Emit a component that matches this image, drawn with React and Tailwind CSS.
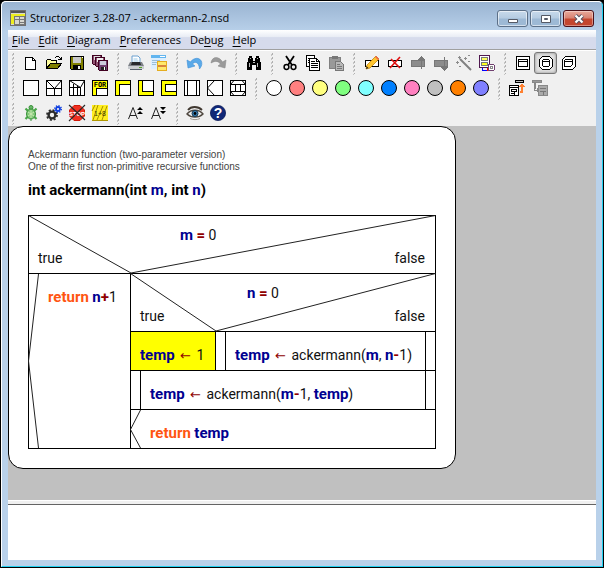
import React from "react";

const ui = "font-['Open_Sans','Noto_Sans',sans-serif]";
const plain = "font-['Roboto','Liberation_Sans',sans-serif]";
const strong = "font-['Roboto','Liberation_Sans',sans-serif] font-bold text-[15px]";

/* ---------- toolbar icons, drawn on a 16 x 16 grid ---------- */

function Icon({ children, crisp = true }) {
  return (
    <svg
      width="16"
      height="16"
      viewBox="0 0 16 16"
      fill="none"
      stroke="#000"
      strokeWidth="1"
      shapeRendering={crisp ? "crispEdges" : "auto"}
      className="block overflow-visible"
      aria-hidden="true"
    >
      {children}
    </svg>
  );
}

const NewIcon = () => (
  <Icon>
    <path d="M2.500 2.500h7l3 3v9h-10z" fill="#fff" />
    <path d="M9.500 2.500v3h3" />
  </Icon>
);
const OpenIcon = () => (
  <Icon>
    <path d="M0.500 13.500v-8l1-1h3l1 1h5v3" fill="#ffffa0" />
    <path d="M0.500 13.500l4-5h11l-4 5z" fill="#808000" />
    <path d="M9 2.500h1M10 1.500h3M13 2.500h1M14 3.500h1M12 4.500h4M15.500 2v3" />
  </Icon>
);
const SaveIcon = () => (
  <Icon>
    <path d="M1.500 1.500h13v13h-12l-1-1z" fill="#808000" />
    <path d="M4 2h8v6H4z" fill="#c8c8c8" stroke="none" />
    <path d="M4 10h8v4h-8z" fill="#000" stroke="none" />
    <path d="M9 11h2v3h-2z" fill="#eee" stroke="none" />
    <path d="M13 2h1v1h-1z" fill="#fff" stroke="none" />
  </Icon>
);
const SaveAllIcon = () => (
  <Icon>
    <path d="M0.500 0.500h9v9h-8l-1-1z" fill="#905070" stroke="#400020" />
    <path d="M2 1h6v4h-6z" fill="#ddd" stroke="none" />
    <path d="M3.500 2.500h9v9h-8l-1-1z" fill="#905070" stroke="#400020" />
    <path d="M5 3h6v4h-6z" fill="#eee" stroke="none" />
    <path d="M6.500 5.500h9v10h-8l-1-1z" fill="#704070" stroke="#400020" />
    <path d="M8 6h6v4h-6z" fill="#ccd" stroke="none" />
    <path d="M9 12h5v3h-5z" fill="#222" stroke="none" />
    <path d="M12 12h1v3h-1z" fill="#fff" stroke="none" />
  </Icon>
);
const PrintIcon = () => (
  <Icon crisp={false}>
    <path d="M4 8V1h6l2 2v5z" fill="#fff" stroke="#6aa0d0" />
    <path d="M5.500 4h4M5.500 6h5" stroke="#9ccbe8" />
    <path d="M2 7h12l2 4v3H0v-3z" fill="#7c8086" stroke="none" />
    <path d="M4 7h8l1 3H3z" fill="#26282c" stroke="none" />
    <path d="M0 11h16v3H0z" fill="#c9ccd0" stroke="none" />
    <path d="M2 14.500h12" stroke="#55606c" />
    <path d="M11 12.500h3" stroke="#58a828" />
  </Icon>
);
const ExportIcon = () => (
  <Icon>
    <path d="M0 0h15v14H0z" fill="#dcefff" stroke="none" />
    <path d="M0 0h15v3H0z" fill="#62b5ef" stroke="none" />
    <path d="M1 5h8v1H1zM1 7h5v1H1zM1 9h4v1H1z" fill="#9bbfd8" stroke="none" />
    <path d="M6.500 6.500h9v9h-9z" fill="#ffe96a" stroke="#e5ad20" />
    <path d="M7 10h8v2H7z" fill="#d9843c" stroke="none" />
    <path d="M9 1h5v1H9z" fill="#fff" stroke="none" />
  </Icon>
);
const UndoIcon = () => (
  <Icon crisp={false}>
    <path d="M0 5l1 8 7-2-2.500-2C8 6 12 7 12.500 14 18 8 13 1 7 4 5 5 4 6 3.500 7z" fill="#5aa9e8" stroke="#3c8fd6" strokeWidth="0.600" />
  </Icon>
);
const RedoIcon = () => (
  <Icon crisp={false}>
    <path d="M16 5l-1 8-7-2 2.500-2C8.500 6 5 5.500 1 8 2 1 9 1 12.500 7z" fill="#9a9a9a" stroke="#8c8c8c" strokeWidth="0.600" />
  </Icon>
);
const FindIcon = () => (
  <Icon>
    <path d="M3 1h3v2h1v3h2V3h1V1h3v2h1v4h1v8h-5v-5H6v5H1V7h1V3h1z" fill="#000" stroke="none" />
    <path d="M4 3h1v1H4zM11 3h1v1h-1zM3 8h1v4H3zM11 8h1v4h-1zM7 7h2v1H7z" fill="#bbb" stroke="none" />
  </Icon>
);
const CutIcon = () => (
  <Icon crisp={false}>
    <path d="M4 1l6 9M12 1L6 10" strokeWidth="1.800" />
    <circle cx="4.500" cy="12" r="2.400" strokeWidth="1.500" />
    <circle cx="11.500" cy="12" r="2.400" strokeWidth="1.500" />
  </Icon>
);
const CopyIcon = () => (
  <Icon>
    <path d="M1.500 .5h8v11h-8z" fill="#fff" />
    <path d="M3 3.500h5M3 5.500h5M3 7.500h3" />
    <path d="M4.500 3.500h7l3 3v9h-10z" fill="#fff" />
    <path d="M6 6.500h4M6 8.500h7M6 10.500h7M6 12.500h7M11.500 3.500v3h3" />
  </Icon>
);
const PasteIcon = () => (
  <Icon>
    <path d="M1.500 2.500h11v11h-11z" fill="#999" stroke="#808080" />
    <path d="M4 1h6v3H4z" fill="#777" stroke="none" />
    <path d="M7.500 6.500h5l3 3v6h-8z" fill="#b8b8b8" stroke="#777" />
    <path d="M9 9.500h3M9 11.500h5M9 13.500h5" stroke="#777" />
  </Icon>
);
const EditIcon = () => (
  <Icon crisp={false}>
    <path d="M1.500 5.500h13v6h-13z" fill="#fff" shapeRendering="crispEdges" />
    <path d="M2 14l1-4L12 1l3 3-9 9z" fill="#ffc52e" stroke="#b87800" strokeWidth="0.700" />
    <path d="M11 2l1-1 3 3-1 1z" fill="#f06050" stroke="none" />
    <path d="M2 14l.8-2.500L4.500 13z" fill="#222" stroke="none" />
  </Icon>
);
const DeleteIcon = () => (
  <Icon crisp={false}>
    <path d="M1.500 5.500h13v6h-13z" fill="#fff" shapeRendering="crispEdges" />
    <path d="M3 13L13 2M4 4l9 9" stroke="#e01010" strokeWidth="1.600" />
  </Icon>
);
const MoveUpIcon = () => (
  <Icon>
    <path d="M1 5.500h13v6H1z" fill="#8c8c8c" stroke="#777" />
    <path d="M11.500 14V1M8 4.500h7M9 3.500h5M10 2.500h3" stroke="#777" />
  </Icon>
);
const MoveDownIcon = () => (
  <Icon>
    <path d="M1 5.500h13v6H1z" fill="#8c8c8c" stroke="#777" />
    <path d="M11.500 2v14M8 12.500h7M9 13.500h5M10 14.500h3" stroke="#777" />
  </Icon>
);
const WandIcon = () => (
  <Icon crisp={false}>
    <path d="M4 4l11 11" stroke="#808080" strokeWidth="2" />
    <path d="M0 7.500h3M1.500 6v3M2 2.500h3M3.500 1v3M8 3.500h3M9.500 2v3M12 .5h2M3 11.500h2M12 6.500h2" stroke="#8c8c8c" />
  </Icon>
);
const TransmuteIcon = () => (
  <Icon>
    <path d="M.5.5h10v12H.5z" fill="#fff" stroke="#501850" />
    <path d="M2.500 2.500h6v3h-6z" fill="#ffff60" stroke="#777" />
    <path d="M2.500 7.500h6v3h-6z" fill="#ffff20" stroke="#777" />
    <path d="M3.500 13v2h4" stroke="#0000ff" />
    <path d="M8 13v3" stroke="#ff0000" />
    <path d="M9.500 9.500h5l1 1v4l-1 1h-5z" fill="#fff" stroke="#704070" />
    <path d="M11.500 11.500h2v2h-2z" stroke="#888" />
  </Icon>
);
const BoxShape = () => (
  <Icon>
    <path d="M1.500 1.500h13v13h-13z" fill="#fff" />
    <path d="M3.500 4.500h9v7h-9zM4 6.500h8" />
  </Icon>
);
const RoundShape = () => (
  <Icon>
    <path d="M4.500 1.500h7l3 3v7l-3 3h-7l-3-3v-7z" fill="#fff" />
    <path d="M5.500 4.500h5l1 1v5l-1 1h-5l-1-1v-5zM5 6.500h6" />
  </Icon>
);
const SliceShape = () => (
  <Icon>
    <path d="M4.500 1.500h10v10l-3 3h-10v-10z" fill="#fff" />
    <path d="M4.500 4.500h7v5l-2 2h-6v-6zM4 6.500h7" />
  </Icon>
);

const Frame = ({ children }) => (
  <Icon>
    <path d="M.5.5h15v15H.5z" fill="#fff" />
    {children}
  </Icon>
);
const AltIcon = () => (
  <Frame>
    <path d="M1 8.500h14M8.500 8v7" />
    <path d="M.5.5l8 8 7-8" shapeRendering="auto" />
  </Frame>
);
const CaseIcon = () => (
  <Frame>
    <path d="M4.500 4v11M8.500 6v9M11.500 7v8M1 7.500h10" />
    <path d="M.5.5l11 7 4-7" shapeRendering="auto" />
  </Frame>
);
const ForIcon = () => (
  <Icon>
    <path d="M.5.5h15v15H.5z" fill="#ffff00" />
    <path d="M4.500 8.500h11v7h-11z" fill="#fff" />
    <text x="8" y="7" textAnchor="middle" fill="#000" stroke="none" fontSize="7" fontWeight="bold" fontFamily="DejaVu Sans Mono, monospace" shapeRendering="auto">FOR</text>
  </Icon>
);
const WhileIcon = () => (
  <Icon>
    <path d="M.5.5h15v15H.5z" fill="#ffff00" />
    <path d="M4.500 4.500h11v11h-11z" fill="#fff" />
  </Icon>
);
const RepeatIcon = () => (
  <Icon>
    <path d="M.5.5h15v15H.5z" fill="#ffff00" />
    <path d="M4.500.5h11v11h-11z" fill="#fff" />
  </Icon>
);
const ForeverIcon = () => (
  <Icon>
    <path d="M.5.5h15v15H.5z" fill="#ffff00" />
    <path d="M4.500 4.500h11v7h-11z" fill="#fff" />
  </Icon>
);
const CallIcon = () => (
  <Frame>
    <path d="M3.500 1v14M12.500 1v14" />
  </Frame>
);
const JumpIcon = () => (
  <Frame>
    <path d="M7.500.5l-7 7.500 7 7.500" shapeRendering="auto" />
  </Frame>
);
const ParallelIcon = () => (
  <Frame>
    <path d="M1 4.500h14M1 11.500h14M5.500 5v6M10.500 5v6" />
    <path d="M.5 4.500l3.500-4M15.500 4.500l-3.500-4M.5 11.500l3.500 4M15.500 11.500l-3.500 4" shapeRendering="auto" />
  </Frame>
);
const colorDot = (color) => () => (
  <Icon crisp={false}>
    <circle cx="8" cy="8" r="7.500" fill={color} />
  </Icon>
);
const CollapseIcon = () => (
  <Icon>
    <path d="M6.500.5h8v2h-8z" fill="#c0c0c0" />
    <path d="M.5 5.500h9v10H.5z" fill="#fff" />
    <path d="M1 7.500h8M2.500 9.500h5v2h-5zM2 13.500h4M5.500 12v3" />
    <path d="M11 11h1V7h-2V6h1V5h1V4h2v1h1v1h1v1h-2v6h-3z" fill="#ff8030" stroke="none" />
  </Icon>
);
const ExpandIcon = () => (
  <Icon>
    <path d="M0 .5h9v2H0z" fill="#999" stroke="#888" />
    <path d="M2 3v7h4M3 3v6M5 8v4" stroke="#888" />
    <path d="M6.500 5.500h9v10h-9z" fill="#aaa" stroke="#888" />
    <path d="M8 8.500h6M8 11.500h6M11.500 12v3" stroke="#777" />
  </Icon>
);
const TurtleIcon = () => (
  <Icon crisp={false}>
    <path d="M2.500 3.500l3 3M13.500 3.500l-3 3M2.500 14l3-3M13.500 14l-3-3" stroke="#48a848" strokeWidth="2.200" />
    <circle cx="8" cy="2.500" r="2" fill="#68b868" stroke="#389038" />
    <ellipse cx="8" cy="9" rx="4.500" ry="5" fill="#80c878" stroke="#389038" />
    <path d="M8 5v8M5 7l6 4M11 7l-6 4" stroke="#c8e8b0" />
    <path d="M8 14v2" stroke="#389038" />
  </Icon>
);
const GearsIcon = () => (
  <Icon crisp={false}>
    <circle cx="6" cy="10" r="3.400" stroke="#2c2c2c" strokeWidth="2.400" />
    <circle cx="6" cy="10" r="5" stroke="#2c2c2c" strokeWidth="1.800" strokeDasharray="2 1.930" />
    <circle cx="12" cy="4" r="2" stroke="#1040e0" strokeWidth="1.800" />
    <circle cx="12" cy="4" r="3.300" stroke="#1040e0" strokeWidth="1.400" strokeDasharray="1.300 1.290" />
  </Icon>
);
const StopIcon = () => (
  <Icon crisp={false}>
    <path d="M5 .5h6L15.500 5v6L11 15.500H5L.5 11V5z" fill="#f03020" stroke="#d01808" />
    <text x="8" y="10.500" textAnchor="middle" fill="#fff" stroke="none" fontSize="6" fontWeight="bold" fontFamily="Liberation Sans, sans-serif">STOP</text>
    <path d="M0 0l16 15M16 0L0 16" stroke="#282828" strokeWidth="1.100" />
  </Icon>
);
const AnalyserIcon = () => (
  <Icon crisp={false}>
    <path d="M0 0h16v16H0z" fill="#ffee20" stroke="none" />
    <path d="M0 6l3-6M1 15l5-15M5 15L11 1M10 15l5-14" stroke="#a89000" />
    <text x="8" y="11" textAnchor="middle" fill="#443800" stroke="none" fontSize="7" fontFamily="Liberation Sans, sans-serif">1+8</text>
    <path d="M0 15.500h16" stroke="#b09800" />
  </Icon>
);
const FontUpIcon = () => (
  <Icon crisp={false}>
    <path d="M.5 14L5 2.500 9.500 14M2 10.500h6" stroke="#222" />
    <path d="M9 5l3-3 3 3zM9 9l3-3 3 3z" fill="#000" stroke="none" />
  </Icon>
);
const FontDownIcon = () => (
  <Icon crisp={false}>
    <path d="M.5 14L5 2.500 9.500 14M2 10.500h6" stroke="#222" />
    <path d="M9 2l3 3 3-3zM9 6l3 3 3-3z" fill="#000" stroke="none" />
  </Icon>
);
const EyeIcon = () => (
  <Icon crisp={false}>
    <path d="M1 5C4 1 11 1 15 5" stroke="#403830" strokeWidth="1.800" />
    <path d="M0 9C4 4 12 4 16 9 12 13 4 13 0 9z" fill="#eee" stroke="#504840" strokeWidth="1.400" />
    <circle cx="8" cy="8.500" r="3" fill="#3880b8" stroke="#183850" />
    <circle cx="8" cy="8.500" r="1.400" fill="#000" stroke="none" />
    <path d="M3 13.500c3 1.500 7 1.500 10 0" stroke="#a09890" />
  </Icon>
);
const HelpIcon = () => (
  <Icon crisp={false}>
    <circle cx="8" cy="8" r="7.600" fill="#102878" stroke="#001050" strokeWidth="0.700" />
    <text x="8" y="13" textAnchor="middle" fill="#fff" stroke="none" fontSize="14" fontWeight="bold" fontFamily="Liberation Sans, sans-serif">?</text>
  </Icon>
);

const toolbarRows = [
  [
    [["New", NewIcon], ["Open", OpenIcon], ["Save", SaveIcon], ["Save all", SaveAllIcon]],
    [["Print", PrintIcon], ["Export as picture", ExportIcon]],
    [["Undo", UndoIcon], ["Redo", RedoIcon]],
    [["Find", FindIcon]],
    [["Cut", CutIcon], ["Copy", CopyIcon], ["Paste", PasteIcon]],
    [["Edit element", EditIcon], ["Delete element", DeleteIcon], ["Move up", MoveUpIcon], ["Move down", MoveDownIcon], ["Wizard", WandIcon], ["Transmute", TransmuteIcon]],
    [["Program", BoxShape], ["Function", RoundShape, true], ["Includable", SliceShape]],
  ],
  [
    [["Instruction", Frame], ["Alternative", AltIcon], ["Case", CaseIcon], ["For loop", ForIcon], ["While loop", WhileIcon], ["Repeat loop", RepeatIcon], ["Endless loop", ForeverIcon], ["Call", CallIcon], ["Jump", JumpIcon], ["Parallel", ParallelIcon]],
    [
      ["White", colorDot("#ffffff")], ["Red", colorDot("#ff8080")], ["Yellow", colorDot("#ffff80")], ["Green", colorDot("#80ff80")], ["Cyan", colorDot("#80ffff")],
      ["Blue", colorDot("#0080ff")], ["Pink", colorDot("#ff80c0")], ["Grey", colorDot("#c0c0c0")], ["Orange", colorDot("#ff8000")], ["Violet", colorDot("#8080ff")],
    ],
    [["Collapse", CollapseIcon], ["Expand", ExpandIcon]],
  ],
  [
    [["Turtleizer", TurtleIcon], ["Executor", GearsIcon], ["Drop breakpoints", StopIcon], ["Analyser", AnalyserIcon]],
    [["Enlarge font", FontUpIcon], ["Reduce font", FontDownIcon]],
    [["View", EyeIcon], ["Help", HelpIcon]],
  ],
];

function Grip() {
  return (
    <svg width="11" height="25" viewBox="0 0 11 25" className="block shrink-0" aria-hidden="true" shapeRendering="crispEdges">
      <path d="M5.500 2v21" stroke="#b0b0b0" strokeWidth="1" strokeDasharray="2 2" />
      <path d="M4.500 3v21" stroke="#c4c4c4" strokeWidth="1" strokeDasharray="2 2" />
    </svg>
  );
}

function ToolButton({ name, Glyph, selected }) {
  return (
    <button
      type="button"
      aria-label={name}
      aria-pressed={selected}
      className={
        selected
          ? "mt-px flex h-[22px] w-[23px] items-start rounded-[3px] border border-[#777] bg-[#e0e0e0] pt-0.5 pl-[3px] shadow-[inset_0_0_3px_#888]"
          : "flex h-[25px] w-[23px] items-start pt-1 pl-1"
      }
    >
      <Glyph />
    </button>
  );
}

/* ---------- menu ---------- */

const menus = [["", "F", "ile"], ["", "E", "dit"], ["", "D", "iagram"], ["", "P", "references"], ["De", "b", "ug"], ["", "H", "elp"]];

function WindowButton({ label, close, children }) {
  return (
    <button
      type="button"
      aria-label={label}
      className={
        close
          ? "flex h-[17px] w-[31px] items-center justify-center rounded-[3px] border border-[#4c1018] bg-linear-to-b from-[#e9a99b] from-0% via-[#d98474] via-45% to-[#c4462f] to-55% shadow-[inset_0_0_0_1px_#ffffff60]"
          : "flex h-[17px] w-[31px] items-center justify-center rounded-[3px] border border-[#5c7088] bg-linear-to-b from-[#c8daec] from-0% via-[#b6cce2] via-45% to-[#9db9d5] to-55% shadow-[inset_0_0_0_1px_#ffffff90]"
      }
    >
      <svg width="12" height="10" viewBox="0 0 12 10" aria-hidden="true">
        {children}
      </svg>
    </button>
  );
}

/* ---------- structogram ---------- */

const Var = ({ children }) => <span className={`${strong} text-[#000090]`}>{children}</span>;
const Op = ({ children }) => <span className={`${strong} text-[#900000]`}>{children}</span>;
const Arrow = () => <span className="mx-0.5 font-['DejaVu_Sans',sans-serif] text-[13px] text-[#900000]">←</span>;
const Key = ({ children }) => <span className={`${strong} text-[#ff5511]`}>{children}</span>;

function Decision({ split, indent, children }) {
  return (
    <div className="relative flex h-[57px] flex-col justify-between pt-[9px] pb-[5px]">
      <svg className="absolute inset-0 h-full w-full overflow-visible" aria-hidden="true">
        <path d={split} fill="none" stroke="#222" strokeWidth="1" />
      </svg>
      <div className={`${indent} leading-5`}>{children}</div>
      <div className="flex justify-between pr-2.5 pl-[9px] leading-5">
        <span>true</span>
        <span>false</span>
      </div>
    </div>
  );
}

function Structogram() {
  return (
    <div className={`${plain} mt-[15px] border border-black text-[14px] text-[#111]`}>
      <Decision split="M-0.5 -0.5L102 57L406.500 -0.5" indent="pl-[151px]">
        <Var>m</Var> <Op>=</Op> 0
      </Decision>
      <div className="grid grid-cols-[101px_1fr] border-t border-black">
        <div className="relative pt-[13px] pl-[19px] leading-5">
          <svg className="absolute inset-0 h-full w-full overflow-visible" viewBox="0 0 101 174" preserveAspectRatio="none" aria-hidden="true">
            <path d="M9.500 0L-0.500 87L9.500 174" fill="none" stroke="#222" />
          </svg>
          <Key>return</Key> <Var>n</Var><Op>+</Op>1
        </div>
        <div className="border-l border-black">
          <Decision split="M-0.5 -0.5L85 57L304.500 -0.5" indent="pl-[116px]">
            <Var>n</Var> <Op>=</Op> 0
          </Decision>
          <div className="grid grid-cols-[84px_1fr] border-t border-black">
            <div className="h-[38px] bg-[#ffff00] pt-[13px] pl-[9px] leading-5">
              <Var>temp</Var> <Arrow /> 1
            </div>
            <div className="border-l border-black px-[9px]">
              <div className="h-full border-x border-black pt-[13px] pl-[9px] leading-5 whitespace-nowrap">
                <Var>temp</Var> <Arrow /> ackermann(<Var>m</Var>, <Var>n</Var><Op>-</Op>1)
              </div>
            </div>
          </div>
          <div className="h-[39px] border-t border-black px-[9px]">
            <div className="h-full border-x border-black pt-[13px] pl-[9px] leading-5">
              <Var>temp</Var> <Arrow /> ackermann(<Var>m</Var><Op>-</Op>1, <Var>temp</Var>)
            </div>
          </div>
          <div className="relative h-[39px] border-t border-black pt-[13px] pl-[19px] leading-5">
            <svg className="absolute inset-0 h-full w-full overflow-visible" aria-hidden="true">
              <path d="M9.500 0L-0.500 19.500L9.500 38" fill="none" stroke="#222" />
            </svg>
            <Key>return</Key> <Var>temp</Var>
          </div>
        </div>
      </div>
    </div>
  );
}

export default function App() {
  return (
    <div className="min-h-screen bg-black">
      <div className={`${ui} flex min-h-screen flex-col rounded-t-[6px] border border-black bg-[#b9d1ea] text-black`}>
        <div className="flex flex-1 flex-col rounded-t-[5px] border border-t-white border-r-[#20d0f0] border-b-[#20d0f0] border-l-white bg-linear-to-b from-[#9ab4d2] from-0% to-[#b9d1ea] to-[30px] px-1.5 pb-1.5">
          <header className="flex h-7 items-start pt-2 text-[11px]">
            <svg width="16" height="16" viewBox="0 0 16 16" className="ml-0.5 shrink-0" shapeRendering="crispEdges" aria-hidden="true">
              <path d="M0.500 0.500h15v15h-15z" fill="#d8d8d0" stroke="#707070" />
              <path d="M1 1h14v2H1z" fill="#555" />
              <path d="M1 4h14v3H1zM1 7h3v7H1z" fill="#eeee20" />
              <path d="M4.500 6.500h10v8h-10zM5 9.500h9M9.500 7v7M10 12.500h4" fill="none" stroke="#777" />
            </svg>
            <h1 className="ml-1 flex-1 leading-4">Structorizer 3.28-07 - ackermann-2.nsd</h1>
            <div className="mr-0.5 flex gap-0.5">
              <WindowButton label="Minimize">
                <path d="M1.500 5.500h9v3h-9z" fill="#fff" stroke="#555a66" />
              </WindowButton>
              <WindowButton label="Maximize">
                <path d="M1.500 1.500h9v7h-9z" fill="#fff" stroke="#555a66" />
                <path d="M4.500 4.500h3v1h-3z" fill="#9db9d5" stroke="#555a66" />
              </WindowButton>
              <WindowButton label="Close" close>
                <path d="M2.500 1.500L9.500 8.500M9.500 1.500L2.500 8.500" stroke="#555060" strokeWidth="4" />
                <path d="M2.500 1.500L9.500 8.500M9.500 1.500L2.500 8.500" stroke="#fff" strokeWidth="2.200" />
              </WindowButton>
            </div>
          </header>

          <nav className="flex h-5 items-center gap-[9px] border-b border-[#a0a0a0] bg-linear-to-b from-white from-0% via-[#e9edf5] via-35% to-[#d6dbec] to-40% pl-1 text-[11px]">
            {menus.map(([before, key, after]) => (
              <button key={before + key} type="button" className="leading-4">
                {before}
                <span className="underline underline-offset-2">{key}</span>
                {after}
              </button>
            ))}
          </nav>

          <div className="border-t border-white bg-[#f0f0f0]" role="toolbar" aria-label="Tools">
            {toolbarRows.map((groups, r) => (
              <div key={r} className="flex h-[25px] items-start">
                {groups.map((tools, g) => (
                  <div key={g} className="mr-0.5 flex items-start">
                    <Grip />
                    {tools.map(([name, Glyph, selected]) => (
                      <ToolButton key={name} name={name} Glyph={Glyph} selected={selected} />
                    ))}
                  </div>
                ))}
              </div>
            ))}
          </div>

          <main className="flex-1 bg-[#c0c0c0]">
            <section className="w-[448px] rounded-[15px] border border-black bg-white px-[19px] pt-[22px] pb-[19px]">
              <p className="font-['Liberation_Sans',Arial,sans-serif] text-[10px] leading-3 text-[#444]">
                Ackermann function (two-parameter version)
                <br />
                One of the first non-primitive recursive functions
              </p>
              <h2 className={`${strong} mt-[7px] leading-5`}>
                int ackermann(int <Var>m</Var>, int <Var>n</Var>)
              </h2>
              <Structogram />
            </section>
          </main>

          <div className="h-[5px] border-t border-b border-t-white border-b-[#646464] bg-[#f0f0f0]" />
          <div className="h-[55px] bg-white" role="log" aria-label="Report list" />
        </div>
      </div>
    </div>
  );
}
